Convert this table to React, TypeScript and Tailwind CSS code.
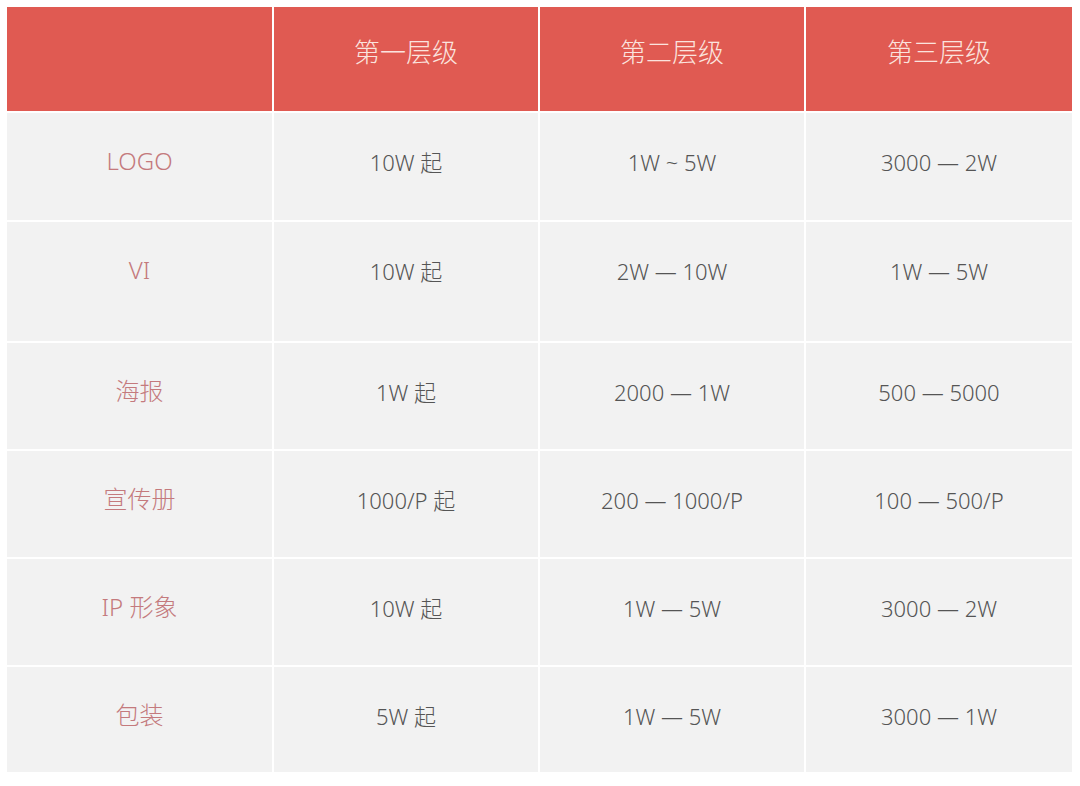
import React from "react";

const rows: { name: string; h: string; cells: string[] }[] = [
  { name: "LOGO", h: "h-[107px]", cells: ["10W 起", "1W ~ 5W", "3000 — 2W"] },
  { name: "VI", h: "h-[119px]", cells: ["10W 起", "2W — 10W", "1W — 5W"] },
  { name: "海报", h: "h-[106px]", cells: ["1W 起", "2000 — 1W", "500 — 5000"] },
  { name: "宣传册", h: "h-[106px]", cells: ["1000/P 起", "200 — 1000/P", "100 — 500/P"] },
  { name: "IP 形象", h: "h-[106px]", cells: ["10W 起", "1W — 5W", "3000 — 2W"] },
  { name: "包装", h: "h-[105px]", cells: ["5W 起", "1W — 5W", "3000 — 1W"] },
];

const font = { fontFamily: '"Noto Sans", "Noto Sans CJK SC", sans-serif' };

export default function App() {
  return (
    <div className="w-[1080px] h-[786px] bg-white pt-[7px] pl-[7px]" style={font}>
      <div className="grid grid-cols-[265px_264px_264px_266px] gap-[2px] w-[1065px]">
        <div className="h-[104px] bg-[#e05a52]" />
        {["第一层级", "第二层级", "第三层级"].map((t) => (
          <div
            key={t}
            className="h-[104px] bg-[#e05a52] flex justify-center pt-[28px] text-[26px] leading-[34px] font-light text-[#fbe3de]"
          >
            {t}
          </div>
        ))}
        {rows.map((r) => (
          <React.Fragment key={r.name}>
            <div
              className={`${r.h} bg-[#f2f2f2] flex justify-center pt-[32px] text-[24px] leading-[32px] font-light text-[#c47a7d]`}
            >
              {r.name}
            </div>
            {r.cells.map((c, i) => (
              <div
                key={i}
                className={`${r.h} bg-[#f2f2f2] flex justify-center pt-[34px] text-[22px] leading-[30px] font-light text-[#555555]`}
              >
                {c}
              </div>
            ))}
          </React.Fragment>
        ))}
      </div>
    </div>
  );
}
